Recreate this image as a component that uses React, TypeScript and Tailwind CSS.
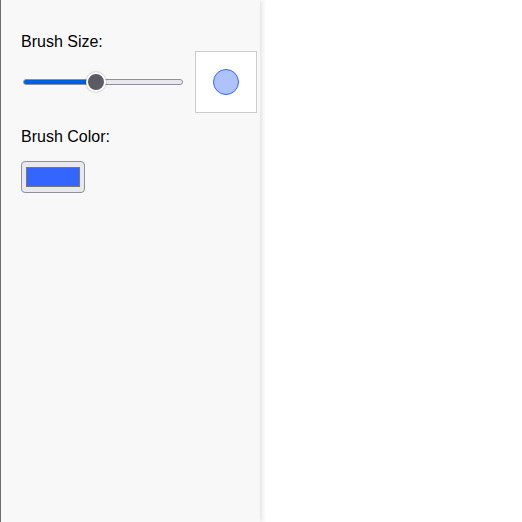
import React, { useState } from "react";

export default function App() {
  const [size, setSize] = useState(23);
  const [color, setColor] = useState("#3366ff");
  const min = 1;
  const max = 50;
  const pct = 45;
  return (
    <div className="flex h-screen w-full bg-white font-['Liberation_Sans',Arial,sans-serif] text-black">
      <div className="relative z-10 flex h-full w-[260px] shrink-0 flex-col border-l border-[#6e6e6e] bg-[#f8f8f8] pl-[20px] pt-[32px] shadow-[2px_0_5px_rgba(0,0,0,0.12)]">
        <div className="text-[16px] leading-[19px]">Brush Size:</div>
        <div className="flex items-center">
          <input
            type="range"
            min={min}
            max={max}
            value={size}
            onChange={(e) => setSize(Number(e.target.value))}
            className="ml-[2px] h-[6px] w-[160px] cursor-pointer appearance-none rounded-full border border-[#8f8f9d] outline-none [&::-webkit-slider-thumb]:h-[20px] [&::-webkit-slider-thumb]:w-[20px] [&::-webkit-slider-thumb]:appearance-none [&::-webkit-slider-thumb]:rounded-full [&::-webkit-slider-thumb]:border-2 [&::-webkit-slider-thumb]:border-white [&::-webkit-slider-thumb]:bg-[#5b5b66] [&::-webkit-slider-thumb]:shadow-[0_0_2px_rgba(0,0,0,0.35)]"
            style={{
              background: `linear-gradient(to right, #0060df 0%, #0060df ${pct}%, #e9e9ed ${pct}%, #e9e9ed 100%)`,
            }}
          />
          <div className="ml-[12px] flex h-[62px] w-[62px] items-center justify-center border border-[#cccccc] bg-white">
            <div className="h-[26px] w-[26px] rounded-full border border-[#3366ff] bg-[#3366ff]/40" />
          </div>
        </div>
        <div className="mt-[14px] text-[16px] leading-[19px]">Brush Color:</div>
        <div className="mt-[15px]">
          <input
            type="color"
            value={color}
            onChange={(e) => setColor(e.target.value)}
            className="h-[32px] w-[64px] cursor-pointer rounded-[4px] border border-[#8f8f9d] bg-[#e9e9ed] px-[2px] py-[1px] [&::-webkit-color-swatch]:border-[#777777]"
          />
        </div>
      </div>
      <div className="flex-1 bg-white" />
    </div>
  );
}
